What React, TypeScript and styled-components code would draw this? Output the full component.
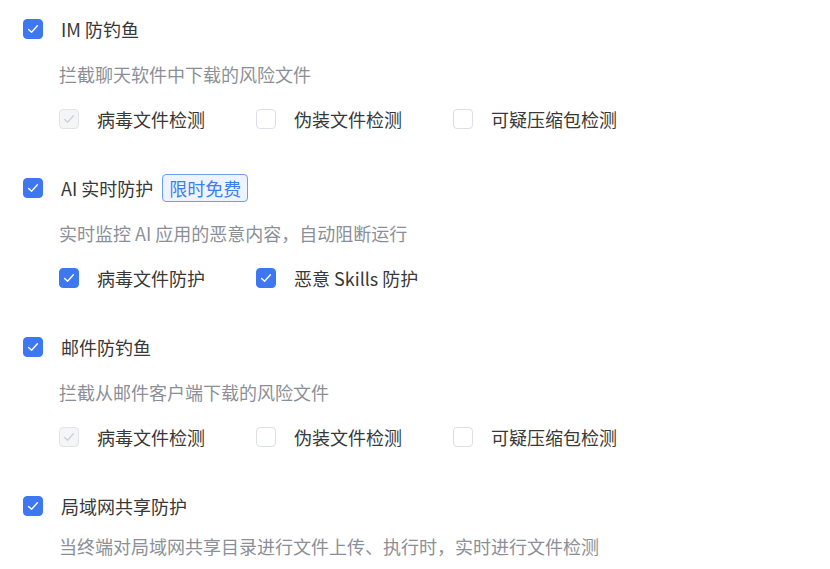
import React from "react";
import styled, { createGlobalStyle } from "styled-components";

type CheckState = "checked" | "unchecked" | "disabledChecked";

interface ISubOption {
  label: string;
  state: CheckState;
}

interface IFeature {
  title: string;
  badge?: string;
  description: string;
  options?: ISubOption[];
  compact?: boolean;
}

const features: IFeature[] = [
  {
    title: "IM 防钓鱼",
    description: "拦截聊天软件中下载的风险文件",
    options: [
      { label: "病毒文件检测", state: "disabledChecked" },
      { label: "伪装文件检测", state: "unchecked" },
      { label: "可疑压缩包检测", state: "unchecked" },
    ],
  },
  {
    title: "AI 实时防护",
    badge: "限时免费",
    description: "实时监控 AI 应用的恶意内容，自动阻断运行",
    options: [
      { label: "病毒文件防护", state: "checked" },
      { label: "恶意 Skills 防护", state: "checked" },
    ],
  },
  {
    title: "邮件防钓鱼",
    description: "拦截从邮件客户端下载的风险文件",
    options: [
      { label: "病毒文件检测", state: "disabledChecked" },
      { label: "伪装文件检测", state: "unchecked" },
      { label: "可疑压缩包检测", state: "unchecked" },
    ],
  },
  {
    title: "局域网共享防护",
    description: "当终端对局域网共享目录进行文件上传、执行时，实时进行文件检测",
    compact: true,
  },
];

const GlobalStyle = createGlobalStyle`
  html, body {
    margin: 0;
    padding: 0;
    background: #ffffff;
  }
  body {
    font-family: "Noto Sans CJK SC", "Noto Sans", "Liberation Sans", sans-serif;
    -webkit-font-smoothing: antialiased;
  }
`;

const Page = styled.div`
  display: flex;
  flex-direction: column;
  gap: 41px;
  padding: 15px 0 0 23px;
  width: 830px;
  height: 569px;
  box-sizing: border-box;
  overflow: hidden;
`;

const Section = styled.section<{ $compact?: boolean }>`
  display: flex;
  flex-direction: column;
  gap: ${(props) => (props.$compact ? "12px" : "17px")};
`;

const HeaderRow = styled.div`
  display: flex;
  align-items: center;
  height: 28px;
`;

const Title = styled.span`
  margin-left: 18px;
  font-size: 18px;
  line-height: 28px;
  color: #383838;
`;

const Badge = styled.span`
  margin-left: 9px;
  height: 28px;
  box-sizing: border-box;
  padding: 0 6px;
  border: 1px solid #6b9cf7;
  border-radius: 4px;
  background: #eef4ff;
  color: #3d7ef6;
  font-size: 18px;
  line-height: 26px;
`;

const Description = styled.p`
  margin: 0 0 0 36px;
  font-size: 18px;
  line-height: 28px;
  color: #8b8f97;
`;

const OptionRow = styled.div`
  display: flex;
  align-items: center;
  height: 28px;
  margin-left: 36px;
`;

const OptionItem = styled.label`
  display: flex;
  align-items: center;
  min-width: 197px;
`;

const OptionLabel = styled.span`
  margin-left: 18px;
  font-size: 18px;
  line-height: 28px;
  color: #383838;
`;

const Box = styled.span<{ $state: CheckState }>`
  display: inline-flex;
  align-items: center;
  justify-content: center;
  flex: none;
  width: 20px;
  height: 20px;
  box-sizing: border-box;
  border-radius: 4px;
  border: 1px solid
    ${(props) =>
      props.$state === "checked"
        ? "#3e77f2"
        : props.$state === "disabledChecked"
        ? "#e1e3e8"
        : "#dcdfe5"};
  background: ${(props) =>
    props.$state === "checked"
      ? "#3e77f2"
      : props.$state === "disabledChecked"
      ? "#f4f5f7"
      : "#ffffff"};
`;

const Checkbox = ({ state }: { state: CheckState }) => (
  <Box $state={state}>
    {state !== "unchecked" && (
      <svg width="14" height="14" viewBox="0 0 14 14" fill="none">
        <path
          d="M2.6 7.4 L5.6 10.2 L11.4 3.8"
          stroke={state === "checked" ? "#ffffff" : "#cdd1d8"}
          strokeWidth="1.4"
          strokeLinecap="round"
          strokeLinejoin="round"
        />
      </svg>
    )}
  </Box>
);

const App = () => {
  return (
    <>
      <GlobalStyle />
      <Page>
        {features.map((feature) => (
          <Section key={feature.title} $compact={feature.compact}>
            <HeaderRow>
              <Checkbox state="checked" />
              <Title>{feature.title}</Title>
              {feature.badge && <Badge>{feature.badge}</Badge>}
            </HeaderRow>
            <Description>{feature.description}</Description>
            {feature.options && (
              <OptionRow>
                {feature.options.map((option) => (
                  <OptionItem key={option.label}>
                    <Checkbox state={option.state} />
                    <OptionLabel>{option.label}</OptionLabel>
                  </OptionItem>
                ))}
              </OptionRow>
            )}
          </Section>
        ))}
      </Page>
    </>
  );
};

export default App;
